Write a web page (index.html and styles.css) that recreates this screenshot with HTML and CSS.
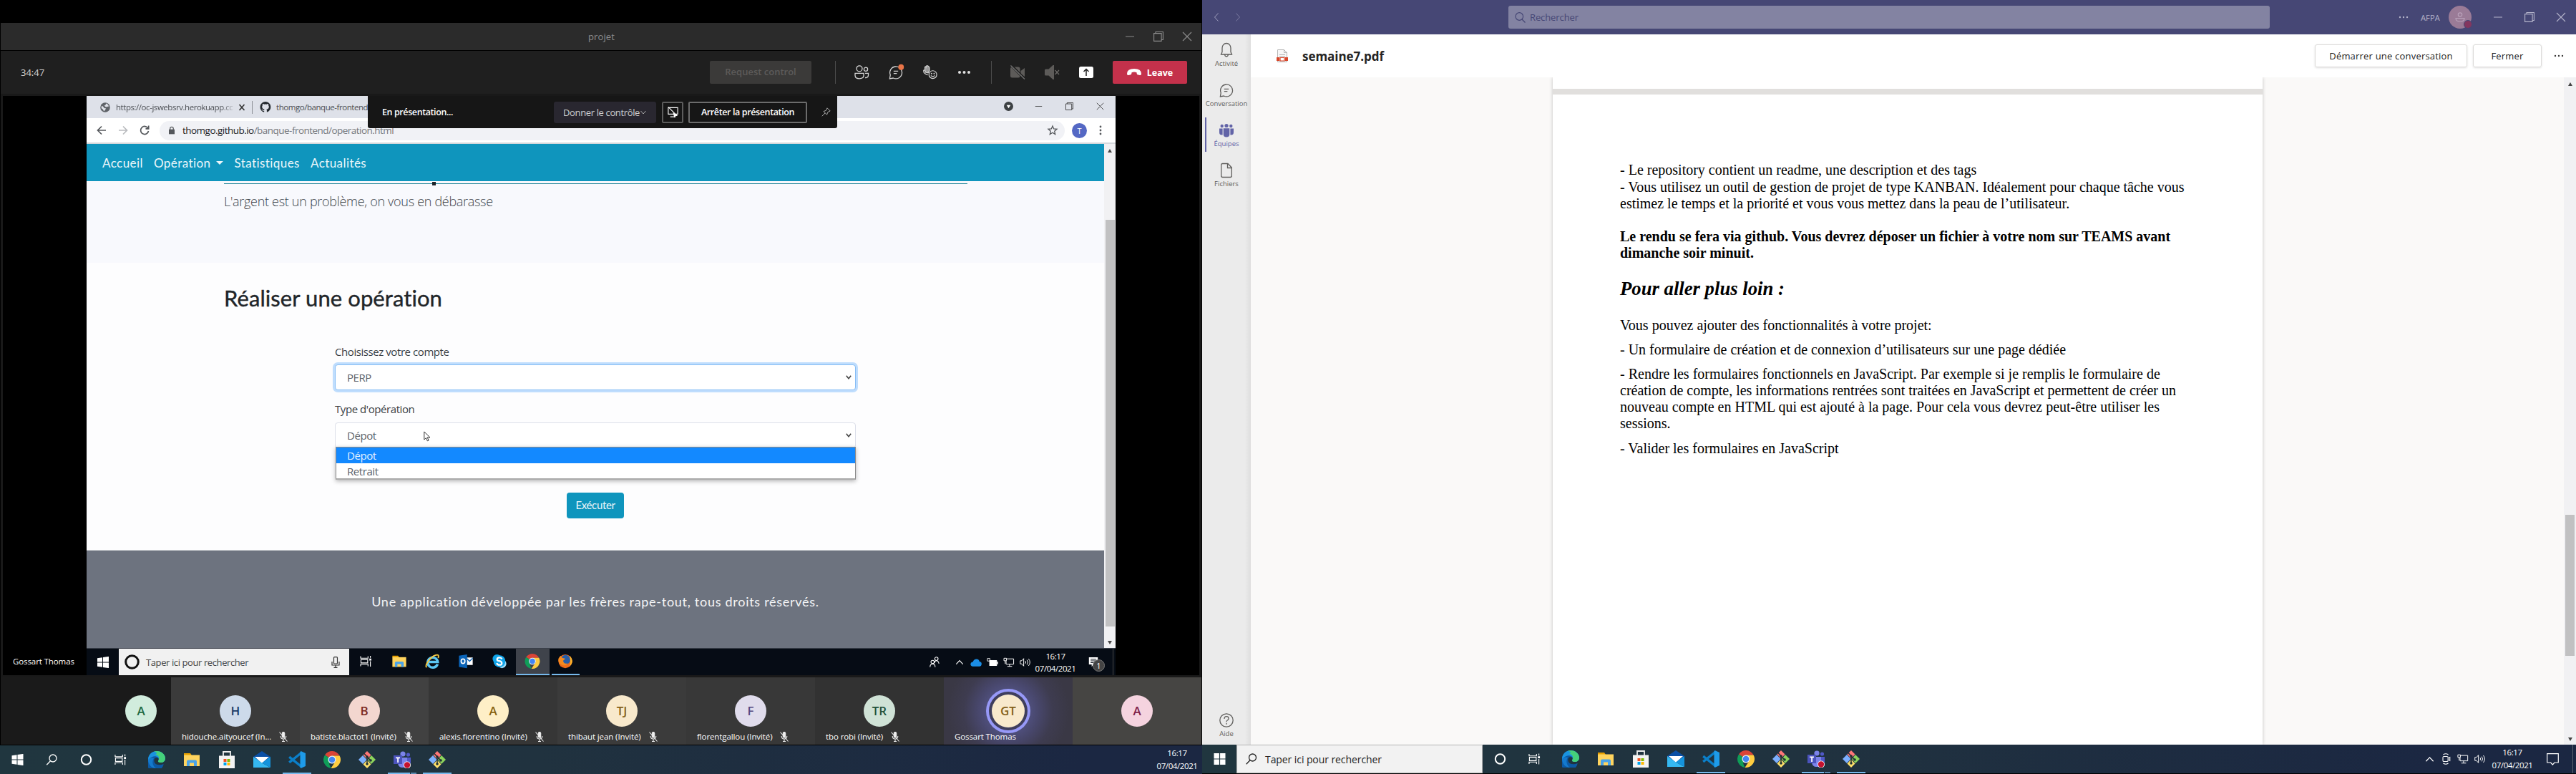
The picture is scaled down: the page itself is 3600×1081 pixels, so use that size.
FILE: index.html
```html
<!DOCTYPE html>
<html lang="fr">
<head>
<meta charset="utf-8">
<title>Bureau étendu</title>
<link rel="stylesheet" href="styles.css">
</head>
<body>
<svg class="defs" aria-hidden="true">
  <symbol id="win" viewBox="0 0 16 16"><path fill="#fff" d="M0 2.2 7 1.2v6.3H0zM8 1l8-1.1v7.6H8zM0 8.5h7v6.3l-7-1zM8 8.5h8v7.6L8 15z"/></symbol>
  <symbol id="win8" viewBox="0 0 16 16"><path fill="#fff" d="M0 0h7.4v7.4H0zM8.6 0H16v7.4H8.6zM0 8.6h7.4V16H0zM8.6 8.6H16V16H8.6z"/></symbol>
  <symbol id="search" viewBox="0 0 16 16"><g fill="none" stroke="currentColor" stroke-width="1.3"><circle cx="9.5" cy="6" r="5"/><path d="M6 9.8.7 15.3"/></g></symbol>
  <symbol id="ring" viewBox="0 0 16 16"><circle cx="8" cy="8" r="6.7" fill="none" stroke="currentColor" stroke-width="2"/></symbol>
  <symbol id="taskview" viewBox="0 0 18 16"><g fill="none" stroke="#fff" stroke-width="1.2"><path d="M1 .5v3h11v-3M1 15.500v-3h11v3M1.500 5.500h10v5h-10zM15.500 0v3M15.500 8v8"/></g><path fill="#fff" d="M14 4h3v3h-3z"/></symbol>
  <symbol id="edge" viewBox="0 0 24 24"><path fill="#0c59a4" d="M21.700 17.900A12 12 0 1 1 1 8c3-5 12-4 13 2-4-2-7 1-5 6 2 4 8 4 12.700 1.900z"/><path fill="#1a93e0" d="M0 12C0 5 5 0 12 0s12 5 12 10c0 4-3 6-6 6-3 0-5-1-3.500-3 1.500-4-3-6.500-7-5.500C3 8.500 0 12 0 16z"/><path fill="#45d17a" d="M8 .7C16-2 24 4 24 10c0 4-3 6-6 6-3 0-5-1-3.500-3 2-5-1-8-5-8C12 4 14 2 8 .7z"/><path fill="#1479cc" d="M0 12c0 7 5 12 11 12-5-3-6-10-3-14C4 9 1 10 0 12z"/></symbol>
  <symbol id="folder" viewBox="0 0 24 24"><path fill="#e8a100" d="M1 3h9l2 3h-11z"/><path fill="#ffd45e" d="M1 5.500h22V21H1z"/><path fill="#4aa3e8" d="M5 21v-6.500q0-2 2-2h10q2 0 2 2V21h-4v-4.500H9V21z"/></symbol>
  <symbol id="store" viewBox="0 0 24 24"><path fill="none" stroke="#eee" stroke-width="1.800" d="M7 7V1h10v6"/><path fill="#f3f3f3" d="M1 6.500h22V24H1z"/><path fill="#f25022" d="M7.500 11h4v4h-4z"/><path fill="#7fba00" d="M12.500 11h4v4h-4z"/><path fill="#00a4ef" d="M7.500 16h4v4h-4z"/><path fill="#ffb900" d="M12.500 16h4v4h-4z"/></symbol>
  <symbol id="mail" viewBox="0 0 24 24"><path fill="#0a4fa5" d="M0 8 12 0l12 8v8H0z"/><path fill="#fff" d="M2 8h20l-10 9z"/><path fill="#35b8f1" d="M0 8v15h24L12 16.500z"/><path fill="#1593dc" d="M24 8v15L12 16.500z"/></symbol>
  <symbol id="vscode" viewBox="0 0 24 24"><path fill="none" stroke="#0b7fc9" stroke-width="3.400" d="M1.200 15.800 18 2.500M1.200 8.200 18 21.500"/><path fill="#1e9be9" d="M17.500 0 24 3v18l-6.500 3-1-1.500v-21z"/></symbol>
  <symbol id="chrome" viewBox="0 0 24 24"><path fill="#db4437" d="M12 12 2 5.400A12 12 0 0 1 22.600 6.500H12z"/><path fill="#0f9d58" d="M12 12 8 18l2.500 5.900A12 12 0 0 1 2 5.400z"/><path fill="#ffcd40" d="M12 6.500h10.600A12 12 0 0 1 10.500 23.900L17 14z"/><circle cx="12" cy="12" r="5.500" fill="#f1f1f1"/><circle cx="12" cy="12" r="4.300" fill="#4285f4"/></symbol>
  <symbol id="git" viewBox="0 0 24 24"><path fill="#f77" d="m12 0 5.500 5.500-5.500 6-5.500-6z"/><path fill="#8cd35c" d="m18 6 6 6-6 6-5-6z"/><path fill="#ffe06b" d="m12 12.500 5.500 6L12 24l-5.500-5.500z"/><path fill="#7db0ff" d="m6 6 5.500 6L6 18l-6-6z"/><g stroke="#1f3036" stroke-width="1.500" fill="none"><path d="M8 3.500 12 8v10M12 8l5 5"/></g><g fill="#1f3036"><circle cx="12" cy="8" r="1.800"/><circle cx="12" cy="18" r="1.800"/><circle cx="17" cy="13" r="1.800"/></g></symbol>
  <symbol id="teams" viewBox="0 0 24 24"><circle cx="13" cy="4" r="3.600" fill="#7b83eb"/><circle cx="20.500" cy="5" r="2.600" fill="#5059c9"/><path fill="#5059c9" d="M16 9h8v7q-1 4-6 4z"/><path fill="#7b83eb" d="M6 9h13v8q-1 6-6.500 6T6 17z"/><path fill="#4b53bc" d="M0 6h12v12H0z"/><path fill="#fff" d="M3 8.500h6v1.700H7V16H5.200v-5.800H3z"/><circle cx="19" cy="19.500" r="5" fill="#fff"/><circle cx="19" cy="19.500" r="4.200" fill="#c4122f"/></symbol>
  <symbol id="min" viewBox="0 0 14 14"><path stroke="currentColor" d="M1 7h12"/></symbol>
  <symbol id="restore" viewBox="0 0 14 14"><path fill="none" stroke="currentColor" stroke-width="1.100" d="M.6 2.600h10.500v10.800H.6zM3 2.500V.5h10.400v11H11.500"/></symbol>
  <symbol id="close" viewBox="0 0 14 14"><path stroke="currentColor" stroke-width="1.100" d="m1 1 12 12M13 1 1 13"/></symbol>
  <symbol id="mute" viewBox="0 0 12 14"><g fill="none" stroke="#eee" stroke-width="1.100"><path fill="#eee" d="M4.300 2q0-1.500 1.700-1.500T7.700 2v4.500Q7.700 8 6 8T4.300 6.500z"/><path d="M2.200 6q0 4 3.800 4t3.800-4M6 10v3.500M4 13.500h4M.5.500l11 13"/></g></symbol>
  <symbol id="caret" viewBox="0 0 14 14"><path fill="none" stroke="#fff" stroke-width="1.300" d="M1.500 10 7 4.200 12.500 10"/></symbol>
  <symbol id="net" viewBox="0 0 18 16"><g fill="none" stroke="#fff" stroke-width="1.100"><path d="M5 2.500h11.500v8.500H4.500V6M10 11v3.500M6.500 14.500h7.500M1 1.500h4v4H1zM3 5.500v5"/></g></symbol>
  <symbol id="vol" viewBox="0 0 18 16"><g fill="none" stroke="#fff" stroke-width="1.100"><path d="M.8 5.500h2.500l3-3.500v12l-3-3.500H.8zM9 6q1.500 2 0 4M11.500 4.200q3 3.800 0 7.600M14 2.400q4.500 5.600 0 11.200"/></g></symbol>
  <symbol id="bubble" viewBox="0 0 22 22"><g fill="none" stroke="currentColor" stroke-width="1.400"><path d="M1.500 20.800 2.500 15A9.300 9.300 0 1 1 7 19.800z"/><path d="M7.500 9.300h7M7.500 12.800h5"/></g></symbol>
</svg>

<div class="desktop">
  <section class="screen-left">
    <header class="call-title">
      <span class="call-name">projet</span>
      <div class="winctl"><svg><use href="#min"/></svg><svg><use href="#restore"/></svg><svg><use href="#close"/></svg></div>
    </header>
    <div class="call-bar">
      <span class="timer">34:47</span>
      <span class="request">Request control</span>
      <i class="sep sep-a"></i>
      <div class="call-icons">
        <svg viewBox="0 0 20 20"><g fill="none" stroke="#d6d6d6" stroke-width="1.300"><circle cx="7" cy="4.800" r="4"/><circle cx="16" cy="5.800" r="2.600"/><path d="M1 11.300h12v3q0 4.500-6 4.500t-6-4.500zM15 11.300h4.500v2.500q0 4-4.500 3.700"/></g></svg>
        <svg viewBox="0 0 22 22" class="chat"><use href="#bubble"/><circle cx="19" cy="3" r="4.300" fill="#e97548"/></svg>
        <svg viewBox="0 0 22 22"><g fill="none" stroke="#d6d6d6" stroke-width="1.300"><path fill="#9a9a9a" d="M2.800 8V3Q3.800 1.800 4.500 3q0-2.500 1.700-2Q7.800.300 8.200 2.500q1.600-.5 1.600 2V8l-2 4-4-1z"/><path d="M2.800 7.500.8 8q-.5 5 6.500 7"/><circle cx="15" cy="14.500" r="6" fill="#1f1f1f"/><path d="M12 15.800q3 3.400 6 0"/></g><circle cx="13" cy="12.800" r="1.100" fill="#d6d6d6"/><circle cx="17" cy="12.800" r="1.100" fill="#d6d6d6"/></svg>
        <svg viewBox="0 0 20 20"><g fill="#e0e0e0"><circle cx="3" cy="10" r="2"/><circle cx="9.500" cy="10" r="2"/><circle cx="16" cy="10" r="2"/></g></svg>
      </div>
      <i class="sep sep-b"></i>
      <div class="call-icons">
        <svg viewBox="0 0 20 20"><g fill="#5d5b59"><rect x="0" y="2.500" width="13.500" height="15" rx="2.500"/><path d="m14.500 8 5.500-4v12l-5.500-4z"/></g><path stroke="#1f1f1f" stroke-width="3.500" d="m1 0 18.500 19"/><path stroke="#777" stroke-width="1.200" d="M.5.500 20 19.500"/></svg>
        <svg viewBox="0 0 20 20"><path fill="#5d5b59" d="M0 7q0-1.500 1.500-1.500h4L11.500 0H13v20h-1.500l-6-5.500h-4Q0 14.500 0 13z"/><path stroke="#6d6b69" stroke-width="1.200" d="m14.500 7 5.500 6m0-6-5.500 6"/></svg>
        <svg viewBox="0 0 20 20"><rect y="2" width="20" height="16" rx="2.500" fill="#fff"/><path fill="none" stroke="#222" stroke-width="1.500" d="M10 15V6M6.500 9 10 5.500 13.500 9"/></svg>
      </div>
      <span class="leave"><svg viewBox="0 0 20 10"><path fill="#fff" d="M0 7Q0 0 10 0t10 7q0 2.500-2 2l-3.500-.8q-1-.3-1-3Q10 4 6.500 5.200q0 2.700-1 3L2 9Q0 9.500 0 7z"/></svg>Leave</span>
    </div>

    <div class="share">
      <div class="share-side"><span>Gossart Thomas</span></div>
      <div class="shared">
        <div class="tabs">
          <svg class="globe" viewBox="0 0 14 14"><circle cx="7" cy="7" r="6.800" fill="#5f6368"/><path fill="#dfe1e8" d="M2 5q2 0 3 2t3 1q-1 4-3 4-1-3-3.500-4zM8 1.500q0 3-2.500 3L8 6.500l4-1Q11 2 8 1.500z"/></svg>
          <span class="tab-text first">https://oc-jswebsrv.herokuapp.cc</span>
          <svg class="tabx" viewBox="0 0 10 10"><path stroke="#333" stroke-width="1.600" d="m1.500 1 7 8m0-8-7 8"/></svg>
          <i class="tabsep"></i>
          <svg class="gh" viewBox="0 0 16 16"><path fill="#24292e" d="M8 0a8 8 0 0 0-2.530 15.590c.4.070.55-.17.55-.380v-1.500c-2.230.49-2.700-1-2.700-1-.36-.93-.89-1.170-.89-1.170-.73-.5.050-.49.050-.49.800.060 1.230.83 1.230.83.720 1.220 1.880.87 2.330.66.070-.52.280-.87.510-1.070-1.780-.2-3.640-.89-3.640-3.950 0-.87.310-1.590.82-2.150-.08-.2-.36-1.020.08-2.120 0 0 .67-.21 2.200.82a7.600 7.600 0 0 1 4 0c1.530-1.040 2.200-.82 2.200-.82.440 1.100.160 1.920.080 2.120.510.560.820 1.270.820 2.150 0 3.070-1.870 3.750-3.650 3.950.290.250.540.730.540 1.480v2.200c0 .21.150.46.550.38A8 8 0 0 0 8 0z"/></svg>
          <span class="tab-text">thomgo/banque-frontend</span>
          <div class="chrome-ctl">
            <svg viewBox="0 0 14 14"><circle cx="7" cy="7" r="7" fill="#3c4043"/><path fill="#fff" d="M4 5h6L7 10z"/></svg>
            <svg class="thin" viewBox="0 0 14 14"><use href="#min"/></svg>
            <svg class="thin" viewBox="0 0 14 14"><use href="#restore"/></svg>
            <svg class="thin" viewBox="0 0 14 14"><use href="#close"/></svg>
          </div>
        </div>
        <div class="urlbar">
          <svg viewBox="0 0 14 14"><path fill="none" stroke="#55585c" stroke-width="1.700" d="M13 7H1.500M7 1.500 1.500 7 7 12.500"/></svg>
          <svg viewBox="0 0 14 14"><path fill="none" stroke="#b9bbbe" stroke-width="1.700" d="M1 7h11.500M7 1.500 12.500 7 7 12.500"/></svg>
          <svg viewBox="0 0 14 14"><path fill="none" stroke="#55585c" stroke-width="1.700" d="M12 4.500A5.500 5.500 0 1 0 12.500 8M12.700.5v4.300H8.500"/></svg>
          <div class="url"><svg class="lock" viewBox="0 0 9 12"><path fill="#55585c" d="M0 4.500h9V12H0z"/><path fill="none" stroke="#55585c" stroke-width="1.400" d="M2 5V3q0-2.200 2.500-2.200T7 3v2"/></svg><span><b>thomgo.github.io</b>/banque-frontend/operation.html</span>
            <svg class="star" viewBox="0 0 14 14"><path fill="none" stroke="#55585c" stroke-width="1.300" d="m7 1 1.700 4 4.300.3L9.700 8.200l1 4.300L7 10.200l-3.700 2.300 1-4.300L1 5.300 5.300 5z"/></svg></div>
          <span class="me">T</span>
          <svg class="dots" viewBox="0 0 4 14"><g fill="#55585c"><circle cx="2" cy="2" r="1.400"/><circle cx="2" cy="7" r="1.400"/><circle cx="2" cy="12" r="1.400"/></g></svg>
        </div>
        <div class="viewport">
          <div class="site">
            <nav class="sitenav"><a>Accueil</a><a>Opération <i></i></a><a>Statistiques</a><a>Actualités</a></nav>
            <div class="hero"><div class="rule"><i></i></div><p>L'argent est un problème, on vous en débarasse</p></div>
            <main>
              <h1>Réaliser une opération</h1>
              <form>
                <label>Choisissez votre compte</label>
                <div class="select focus">PERP<svg viewBox="0 0 8 6"><path d="m.8.8 3.200 4 3.200-4"/></svg></div>
                <label class="second">Type d'opération</label>
                <div class="select">Dépot<svg viewBox="0 0 8 6"><path d="m.8.8 3.200 4 3.200-4"/></svg>
                  <div class="options"><div class="on">Dépot</div><div>Retrait</div></div>
                  <svg class="pointer" viewBox="0 0 10 15"><path fill="#fff" stroke="#333" d="M.8 1v11l2.700-2.500 1.800 4.300 1.800-.8-1.800-4h3.700z"/></svg>
                </div>
                <div class="btnrow"><span class="exec">Exécuter</span></div>
              </form>
            </main>
            <footer>Une application développée par les frères rape-tout, tous droits réservés.</footer>
          </div>
          <div class="scroll"><i class="up"></i><i class="thumb"></i><i class="down"></i></div>
        </div>
        <div class="sbar">
          <div class="sstart"><svg><use href="#win"/></svg></div>
          <div class="ssearch"><svg class="sring" viewBox="0 0 21 21"><circle cx="10.500" cy="10.500" r="8.800" fill="none" stroke="#111" stroke-width="3"/></svg><span>Taper ici pour rechercher</span>
            <svg class="mic" viewBox="0 0 12 16"><g fill="none" stroke="#333" stroke-width="1.200"><rect x="3.500" y=".7" width="5" height="9.300" rx="1"/><path d="M1 7v5h10V7M6 12v3M3.500 15.300h5"/></g></svg></div>
          <div class="sapp"><svg class="tv"><use href="#taskview"/></svg></div>
          <div class="sapp"><svg><use href="#folder"/></svg></div>
          <div class="sapp"><svg viewBox="0 0 24 24"><path fill="none" stroke="#5cc8f5" stroke-width="4" d="M20.500 16.500A8 8 0 1 1 20.800 13H7"/><path fill="none" stroke="#f7c940" stroke-width="2" d="M3 22C-1 18 12 1 21 2q2 1 .5 5"/></svg></div>
          <div class="sapp"><svg viewBox="0 0 24 24"><path fill="#0a64b8" d="M1 3 14 1v22L1 21z"/><path fill="#fff" d="M14 6h9v12h-9z"/><path fill="none" stroke="#0a64b8" stroke-width="1.500" d="m14 8 4 4 5-5"/><ellipse cx="7.500" cy="12" rx="3" ry="3.700" fill="none" stroke="#fff" stroke-width="2"/></svg></div>
          <div class="sapp"><svg viewBox="0 0 24 24"><circle cx="8" cy="8" r="7" fill="#0da4e8"/><circle cx="16" cy="16" r="7" fill="#9bdcf8"/><circle cx="12" cy="12" r="9.500" fill="#12a5ea"/><path fill="none" stroke="#fff" stroke-width="2.600" d="M16 8.500Q14.500 6 11.500 6.200T8.200 9q0 2 3.600 2.700t4 3.300q0 2.800-3.600 2.900T7.700 15"/></svg></div>
          <div class="sapp active run"><svg><use href="#chrome"/></svg></div>
          <div class="sapp run"><svg viewBox="0 0 24 24"><circle cx="12" cy="12" r="11" fill="#ef6c1a"/><circle cx="12.500" cy="9.500" r="7.500" fill="#285ea8"/><path fill="#ffb52b" d="M19 3q5 5 4 11-1 4-4 6 2-5 1-9z"/><path fill="#f58a1f" d="M1 8q2-4 4-5 0 3 4 4 4 0 2 2-3 1-2 4 2 4 7 2-3 5-9 3-7-3-6-10z"/></svg></div>
          <div class="stray">
            <div class="ppl"><svg viewBox="0 0 16 18"><g fill="none" stroke="#fff" stroke-width="1.200"><circle cx="11" cy="3.500" r="2.600"/><path d="M8 10q0-3.500 3-3.500T15 11"/><circle cx="5" cy="8.500" r="2.600"/><path d="M1 16.500q0-5 4-5t4 5"/></g></svg></div>
            <div><svg class="s13"><use href="#caret"/></svg></div>
            <div><svg viewBox="0 0 18 13"><path fill="#1b8ee6" d="M3.500 13Q0 12 .5 9 1 6 4 6q2-5.500 7-4.500 3 1 3.500 4 3.500.500 3.300 4-.3 3-3 3.500z"/></svg></div>
            <div><svg viewBox="0 0 18 15"><path fill="#fff" d="M4 4h12v9H4zM16.500 6.500H18v4h-1.500z"/><path fill="none" stroke="#fff" d="M1 1.500h4v4H1z"/></svg></div>
            <div><svg><use href="#net"/></svg></div>
            <div><svg><use href="#vol"/></svg></div>
            <div class="sclock"><span>16:17</span><span>07/04/2021</span></div>
            <div class="snotif"><svg viewBox="0 0 16 18"><path fill="#fff" d="M0 0h16v13H8l-3 4v-4H0z"/><path stroke="#0a1018" stroke-width="1.300" d="M3 3.500h10M3 6.500h10M3 9.500h10"/></svg><b>1</b></div>
            <i></i>
          </div>
        </div>
        <div class="presenting">
          <span class="ptext">En présentation...</span>
          <span class="give">Donner le contrôle<svg viewBox="0 0 8 6"><path d="m.5 1 3.500 4L7.500 1"/></svg></span>
          <span class="noshow"><svg viewBox="0 0 18 16"><g fill="none" stroke="#fff" stroke-width="1.200"><path d="M2 1h14v9.500H2zM5 14.500h8M2 0l13 13"/></g><path fill="#fff" d="M9 8l7 5-3.500.5L11 16z"/></svg></span>
          <span class="stop">Arrêter la présentation</span>
          <svg class="pin" viewBox="0 0 13 13"><path fill="none" stroke="#aaa" d="m8 .8 4.200 4.200-3.200 1.500-1.500 3.700L3 5.600l3.700-1.500zM5.200 7.800.7 12.300"/></svg>
        </div>
      </div>
    </div>

    <div class="people">
      <div class="p first"><b class="green">A</b></div>
      <div class="p t1"><b class="blue">H</b><span>hidouche.aityoucef (In...<svg><use href="#mute"/></svg></span></div>
      <div class="p t2"><b class="rose">B</b><span>batiste.blactot1 (Invité)<svg><use href="#mute"/></svg></span></div>
      <div class="p t3"><b class="gold">A</b><span>alexis.fiorentino (Invité)<svg><use href="#mute"/></svg></span></div>
      <div class="p t4"><b class="sand">TJ</b><span>thibaut jean (Invité)<svg><use href="#mute"/></svg></span></div>
      <div class="p t5"><b class="lilac">F</b><span>florentgallou (Invité)<svg><use href="#mute"/></svg></span></div>
      <div class="p t6"><b class="mint">TR</b><span>tbo robi (Invité)<svg><use href="#mute"/></svg></span></div>
      <div class="p talking"><b class="sand">GT</b><span>Gossart Thomas</span></div>
      <div class="p t8"><b class="pink">A</b></div>
    </div>

    <div class="taskbar tb-left">
      <div class="sys"><svg><use href="#win"/></svg></div>
      <div class="sys"><svg><use href="#search"/></svg></div>
      <div class="sys"><svg><use href="#ring"/></svg></div>
      <div class="sys"><svg><use href="#taskview"/></svg></div>
      <div class="apps">
        <div><svg><use href="#edge"/></svg></div><div><svg><use href="#folder"/></svg></div><div><svg><use href="#store"/></svg></div><div><svg><use href="#mail"/></svg></div><div class="run"><svg><use href="#vscode"/></svg></div><div><svg><use href="#chrome"/></svg></div><div><svg><use href="#git"/></svg></div><div class="run multi"><svg><use href="#teams"/></svg></div><div class="run"><svg><use href="#git"/></svg></div>
      </div>
      <div class="clock"><span>16:17</span><span>07/04/2021</span></div>
    </div>
  </section>

  <section class="screen-right">
    <header class="topbar">
      <svg class="chev" viewBox="0 0 8 12"><path d="M6.500.5 1.500 6l5 5.500"/></svg>
      <svg class="chev dim" viewBox="0 0 8 12"><path d="m1.500.5 5 5.500-5 5.500"/></svg>
      <div class="find"><svg viewBox="0 0 15 15"><g fill="none" stroke="#464775" stroke-width="1.200"><circle cx="6.300" cy="6" r="5.300"/><path d="m10 10 4.500 4.500"/></g></svg>Rechercher</div>
      <svg class="more" viewBox="0 0 14 4"><g fill="#b4b4ca"><circle cx="2" cy="2" r="1.200"/><circle cx="7" cy="2" r="1.200"/><circle cx="12" cy="2" r="1.200"/></g></svg>
      <span class="org">AFPA</span>
      <span class="avatar"><svg viewBox="0 0 14 14"><g fill="none" stroke="#b9a2ba" stroke-width="1.200"><circle cx="7" cy="3.500" r="2.700"/><path d="M1 8.500h12q0 4.500-6 4.500T1 8.500z"/></g></svg><i></i></span>
      <div class="winctl"><svg><use href="#min"/></svg><svg><use href="#restore"/></svg><svg><use href="#close"/></svg></div>
    </header>
    <div class="teams">
      <aside>
        <div class="rail"><svg viewBox="0 0 20 20"><g fill="none" stroke="#5f5e5c" stroke-width="1.300"><path d="M2.500 16h15L16 12.500V7A6 6.500 0 0 0 4 7v5.500zM7.500 16q.5 3 2.500 3t2.500-3"/></g></svg>Activité</div>
        <div class="rail"><svg><use href="#bubble"/></svg>Conversation</div>
        <div class="rail sel"><svg viewBox="0 0 20 20"><g fill="#6264a7"><circle cx="10" cy="3.500" r="2.600"/><circle cx="3.700" cy="4" r="2.200"/><circle cx="16.300" cy="4" r="2.200"/><path d="M5.700 7.200h8.600v8.300q0 4-4.300 4t-4.300-4zM0 7.500h4.600v9Q0 17 0 13zM15.400 7.500H20V13q0 4-4.600 3.500z"/></g></svg>Équipes</div>
        <div class="rail"><svg viewBox="0 0 20 20"><g fill="none" stroke="#5f5e5c" stroke-width="1.300"><path d="M2.700 2.500q0-2 2-2H12L17.300 6v11.500q0 2-2 2H4.700q-2 0-2-2zM11.500.8V6.500h5.500"/></g></svg>Fichiers</div>
        <div class="rail help"><svg viewBox="0 0 20 20"><g fill="none" stroke="#5f5e5c" stroke-width="1.300"><circle cx="10" cy="10" r="9.200"/><path d="M7 8q0-3.300 3-3.300T13 7.500q0 1.500-1.700 2.500T10 12.500M10 14v1.700"/></g></svg>Aide</div>
      </aside>
      <div class="pane">
        <div class="filebar">
          <svg class="pdf" viewBox="0 0 16 18"><path fill="#f7f7f7" stroke="#b5b5b5" d="M1.500.5h9l4 4v13h-13z"/><path fill="none" stroke="#b5b5b5" d="M10.500.5v4h4M4 7.500h8M4 9.500h8"/><path fill="#d8472b" d="M0 11h4v5H0zM12 11h4v5h-4z"/><path fill="#fff" stroke="#d8472b" stroke-width="1.200" d="M5 11.500h6v4.500H5z"/></svg>
          <h2>semaine7.pdf</h2>
          <span class="btn talk">Démarrer une conversation</span><span class="btn shut">Fermer</span>
          <svg class="more2" viewBox="0 0 14 4"><g fill="#3b3a39"><circle cx="2" cy="2" r="1.200"/><circle cx="7" cy="2" r="1.200"/><circle cx="12" cy="2" r="1.200"/></g></svg>
        </div>
        <div class="viewer">
          <div class="pages">
            <div class="prev"></div>
            <article>
              <p>- Le repository contient un readme, une description et des tags</p>
              <p class="l2">- Vous utilisez un outil de gestion de projet de type KANBAN. Idéalement pour chaque tâche vous<br>estimez le temps et la priorité et vous vous mettez dans la peau de l’utilisateur.</p>
              <p class="strong">Le rendu se fera via github. Vous devrez déposer un fichier à votre nom sur TEAMS avant<br>dimanche soir minuit.</p>
              <h3>Pour aller plus loin :</h3>
              <p>Vous pouvez ajouter des fonctionnalités à votre projet:</p>
              <p class="item">- Un formulaire de création et de connexion d’utilisateurs sur une page dédiée</p>
              <p class="item">- Rendre les formulaires fonctionnels en JavaScript. Par exemple si je remplis le formulaire de<br>création de compte, les informations rentrées sont traitées en JavaScript et permettent de créer un<br>nouveau compte en HTML qui est ajouté à la page. Pour cela vous devrez peut-être utiliser les<br>sessions.</p>
              <p class="item last">- Valider les formulaires en JavaScript</p>
            </article>
          </div>
          <div class="scroll pdfscroll"><i class="up"></i><i class="thumb"></i><i class="down"></i></div>
        </div>
      </div>
    </div>
    <div class="taskbar tb-right">
      <div class="sys"><svg><use href="#win8"/></svg></div>
      <div class="type"><svg><use href="#search"/></svg>Taper ici pour rechercher</div>
      <div class="sys"><svg><use href="#ring"/></svg></div>
      <div class="sys"><svg><use href="#taskview"/></svg></div>
      <div class="apps">
        <div><svg><use href="#edge"/></svg></div><div><svg><use href="#folder"/></svg></div><div><svg><use href="#store"/></svg></div><div><svg><use href="#mail"/></svg></div><div class="run"><svg><use href="#vscode"/></svg></div><div><svg><use href="#chrome"/></svg></div><div><svg><use href="#git"/></svg></div><div class="run multi"><svg><use href="#teams"/></svg></div><div class="run"><svg><use href="#git"/></svg></div>
      </div>
      <div class="tray">
        <svg class="s13"><use href="#caret"/></svg>
        <svg viewBox="0 0 16 18"><g fill="none" stroke="#fff" stroke-width="1.200"><rect x="3.500" y="5" width="8" height="8" rx="1.500"/><path d="m12 8 2.500-1.500v5L12 10M4 2.200Q8-.5 12 2.200M4 15.800q4 2.700 8 0"/></g></svg>
        <svg><use href="#net"/></svg>
        <svg><use href="#vol"/></svg>
      </div>
      <div class="clock"><span>16:17</span><span>07/04/2021</span></div>
      <svg class="notif" viewBox="0 0 17 17"><path fill="none" stroke="#fff" stroke-width="1.200" d="M.7.700h15.600v12.300H11l-2.700 3-2.700-3H.7z"/></svg>
      <i class="peek"></i>
    </div>
  </section>
</div>
</body>
</html>
```
FILE: styles.css
```css
* { box-sizing: border-box; }
body { margin: 0; background: #000; font: 13px "Open Sans", "Noto Sans", sans-serif; color: #fff; white-space: nowrap; }
h1, h2, h3, p { margin: 0; }
svg { display: block; flex: none; overflow: visible; }
.defs { position: absolute; width: 0; height: 0; }
.desktop { display: flex; width: 3600px; height: 1081px; overflow: hidden; }

/* call window */
.screen-left { width: 1680px; flex: none; padding-top: 32px; display: flex; flex-direction: column; }
.call-title { height: 38px; margin: 0 1px; background: #2b2b2b; display: flex; align-items: center; color: #8d8d8d; }
.call-name { margin-left: 821px; letter-spacing: .1px; }
.winctl { display: flex; gap: 26px; color: inherit; }
.winctl svg { width: 14px; height: 14px; }
.call-title .winctl { margin-left: auto; margin-right: 13px; }
.call-bar { height: 60px; margin: 1px 1px 0; background: #1f1f1f; display: flex; align-items: center; }
.timer { width: 963px; padding-left: 28px; color: #d5d5d5; }
.request { width: 142px; height: 32px; margin-left: 28px; background: #3b3a39; color: #5d5b59; border-radius: 2px; font-weight: 600; line-height: 31px; text-align: center; flex: none; }
.sep { width: 1px; height: 32px; background: #4c4c4c; flex: none; }
.sep-a { margin: 0 26px 0 33px; }
.sep-b { margin: 0 26px 0 27px; }
.call-icons { display: flex; gap: 28px; color: #d6d6d6; }
.call-icons svg { width: 20px; height: 20px; }
.leave { width: 104px; height: 32px; margin-left: 27px; background: #c4314b; border-radius: 2px; display: flex; align-items: center; justify-content: center; gap: 8px; font-weight: 700; font-size: 12.500px; }
.leave svg { width: 20px; height: 10px; }
.share { height: 812px; border-top: 3px solid #191919; margin: 0 1px; border-left: 3px solid #191919; border-right: 3px solid #191919; display: flex; background: #000; }
.share-side { width: 117px; display: flex; align-items: flex-end; padding: 0 0 10px 14px; font-size: 11.500px; line-height: 18px; letter-spacing: -.1px; }
.shared { width: 1438px; position: relative; }

/* shared browser */
.tabs { height: 31px; background: #dee1e9; display: flex; align-items: center; color: #4c4f54; padding-left: 19px; }
.globe { width: 14px; height: 14px; margin-right: 8px; }
.tab-text { font-size: 11.500px; letter-spacing: -.45px; width: 130px; overflow: hidden; }
.tab-text.first { width: 164px; margin-right: 7px; -webkit-mask: linear-gradient(90deg, #000 90%, rgba(0,0,0,.2)); mask: linear-gradient(90deg, #000 90%, rgba(0,0,0,.2)); }
.tabx { width: 10px; height: 10px; margin-right: 9px; }
.tabsep { width: 1px; height: 18px; background: #8b8e94; margin-right: 10px; }
.gh { width: 16px; height: 15px; margin-right: 7px; }
.chrome-ctl { margin-left: auto; display: flex; align-items: center; color: #333; margin-right: 16px; gap: 30px; padding-bottom: 3px; }
.chrome-ctl svg { width: 13px; height: 13px; }
.chrome-ctl .thin { width: 11px; height: 11px; }
.chrome-ctl .thin:nth-child(3), .chrome-ctl .thin:nth-child(4) { margin-left: 2px; }
.urlbar { height: 36px; background: #fff; border-bottom: 2px solid #d5d8dc; display: flex; align-items: center; padding-left: 14px; }
.urlbar > svg { width: 14px; height: 14px; margin-right: 16px; }
.url { width: 1265px; height: 27px; margin-left: -2px; border-radius: 14px; background: #f1f2f6; display: flex; align-items: center; color: #75787d; font-size: 13.500px; letter-spacing: -.53px; padding: 0 10px 0 13px; margin-right: 10px; }
.url b { font-weight: 400; color: #202124; }
.lock { width: 8px; height: 12px; margin-right: 11px; }
.star { width: 14px; height: 14px; margin-left: auto; }
.me { width: 21px; height: 21px; border-radius: 50%; background: #5468c4; font-size: 11px; line-height: 21px; text-align: center; }
.urlbar .dots { width: 4px; height: 14px; margin: 0 0 0 17px; }
.viewport { height: 704px; display: flex; }
.site { width: 1422px; background: #fdfdfe; }
.sitenav { height: 52px; background: #0f95bd; display: flex; align-items: center; font: 17px Lato, sans-serif; letter-spacing: .43px; color: #eaf6fa; padding-left: 22px; gap: 15px; }
.sitenav a { display: flex; align-items: center; }
.sitenav i { border: 5px solid transparent; border-top: 5px solid #eaf6fa; border-bottom: 0; margin-left: 8px; }
.hero { height: 114px; background: #f8f9fd; padding: 3px 0 0 192px; }
.rule { width: 1039px; height: 1px; background: #2b8a9c; }
.rule i { display: block; width: 5px; height: 5px; background: #1d2329; position: relative; left: 291px; top: -2px; }
.hero p { margin-top: 11px; font-size: 18px; line-height: 26px; font-weight: 300; letter-spacing: -.3px; color: #3f454b; }
main { height: 401px; padding: 30px 0 0 192px; color: #3a3f45; }
h1 { font: 400 31px/38px Lato, sans-serif; letter-spacing: .08px; color: #212529; -webkit-text-stroke: .4px #212529; }
form { margin: 46px 0 0 155px; width: 728px; font-size: 15px; letter-spacing: -.43px; line-height: 20px; }
label { display: block; margin-bottom: 8px; }
label.second { margin: 16px 0 9px; }
.select { height: 36px; border: 1px solid #dcdfe9; border-radius: 4px; background: #fff; display: flex; align-items: center; padding: 0 5px 0 16px; color: #5b6168; position: relative; }
.select.focus { border-color: #86bdf5; box-shadow: 0 0 0 3px #bfddfd; }
.select > svg:not(.pointer) { width: 8px; height: 6px; margin-left: auto; fill: none; stroke: #444; stroke-width: 1.600; }
.options { position: absolute; left: 0; right: -1px; top: 33px; border: 1px solid #8a8a8a; border-bottom: 2px solid #aaa; background: #fff; box-shadow: 0 2px 6px rgba(0,0,0,.3); z-index: 1; }
.options div { height: 21.500px; line-height: 22px; padding-left: 15px; }
.options .on { background: #1389ff; color: #e6f3ff; }
.pointer { position: absolute; left: 123px; top: 11px; width: 10px; height: 15px; }
.btnrow { display: flex; justify-content: center; margin-top: 62px; }
.exec { width: 80px; height: 36px; border-radius: 4px; background: #0f95bd; color: #eaf6fa; font: 15px/35px Lato, sans-serif; text-align: center; letter-spacing: -.35px; }
footer { height: 137px; border-top: 1px solid #cfd2d6; background: #6d737f; font: 18px/143px Lato, sans-serif; letter-spacing: .72px; text-align: center; color: #f3f4f6; }
.scroll { width: 16px; background: #f1f1f3; display: flex; flex-direction: column; align-items: center; }
.scroll i { flex: none; }
.scroll .up { border: 3.500px solid transparent; border-top: 0; border-bottom: 5px solid #444; margin-top: 7px; }
.scroll .down { border: 3.500px solid transparent; border-bottom: 0; border-top: 5px solid #444; margin: auto 0 5px; }
.scroll .thumb { width: 13px; height: 568px; background: #c1c1c2; margin-top: 94px; }

/* shared task bar */
.sbar { height: 38px; background: #060c15; display: flex; border-top: 1px solid #3a3f4a; }
.sstart { width: 45px; display: flex; align-items: center; justify-content: center; }
.sstart svg { width: 16px; height: 16px; }
.ssearch { width: 322px; background: #f1f1f1; color: #444; display: flex; align-items: center; letter-spacing: -.4px; padding: 0 13px 0 8px; }
.sring { width: 21px; height: 21px; margin-right: 9px; }
.mic { width: 12px; height: 16px; margin-left: auto; }
.sapp { width: 46.600px; display: flex; align-items: center; justify-content: center; border-bottom: 2px solid transparent; }
.sapp svg { width: 22px; height: 21px; }
.sapp .tv { width: 17px; height: 15px; }
.sapp.active { background: #3f434b; }
.sapp.run { border-color: #76b9ed; }
.sapp.run:not(.active) { margin-left: 3px; width: 39px; }
.stray { margin-left: auto; display: flex; align-items: center; }
.stray div { width: 23px; display: flex; justify-content: center; align-items: center; }
.stray svg { width: 16px; height: 14px; }
.stray .s13 { width: 12px; height: 12px; }
.stray .ppl { width: 26px; margin-right: 10px; }
.stray .ppl svg { height: 16px; }
.stray .sclock { width: 62px; flex-direction: column; font-size: 11.500px; line-height: 17px; letter-spacing: -.42px; }
.stray .snotif { width: 49px; position: relative; justify-content: flex-start; padding-left: 14px; }
.snotif b { position: absolute; left: 21px; top: 3px; width: 17px; height: 17px; border-radius: 50%; background: #444; border: 1px solid #777; font: 11px/15px "Open Sans", sans-serif; text-align: center; }
.stray i { width: 1px; height: 37px; background: #444; margin-right: 3px; }

/* presenter toolbar floats over the shared browser */
.presenting { position: absolute; left: 393px; top: 0; width: 656px; height: 45px; background: #161616; border-radius: 0 0 3px 3px; display: flex; align-items: center; padding: 0 9px 0 20px; font-weight: 600; font-size: 12.500px; }
.ptext { width: 240px; letter-spacing: -.4px; }
.give { width: 143px; height: 30px; background: #292730; color: #cfcfcf; display: flex; align-items: center; padding-left: 13px; font-weight: 400; font-size: 13px; letter-spacing: -.36px; border-radius: 3px; }
.give svg { width: 8px; height: 6px; margin-left: 1px; fill: none; stroke: #aaa; }
.noshow { width: 30px; height: 30px; border: 2px solid #5c5c5c; margin: 0 7px 0 8px; display: flex; align-items: center; justify-content: center; border-radius: 2px; }
.noshow svg { width: 17px; height: 16px; }
.stop { width: 166px; height: 30px; border: 2px solid #6c6c6c; line-height: 25px; text-align: center; letter-spacing: -.38px; border-radius: 2px; }
.pin { width: 13px; height: 13px; margin-left: auto; }

/* participants */
.people { height: 98px; border-top: 3px solid #191919; border-bottom: 1px solid #000; margin: 0 1px; display: flex; }
.p { width: 180px; position: relative; display: flex; justify-content: center; padding-top: 25px; }
.p.first { width: 238px; background: #1a1a1a; padding-left: 154px; }
.t1 { background: #3b3b3b; } .t2 { background: #414141; } .t3 { background: #363636; } .t4 { background: #3b3b3b; }
.t5 { background: #383838; } .t6 { background: #323232; } .t8 { background: #464543; }
.talking { background: radial-gradient(circle at 50% 50%, #55568a 20px, #48476c 42px, #3e3c50 62px, #3a3845 85px); }
.p b { width: 44px; height: 44px; border-radius: 50%; font: 600 17px/44px "Open Sans", sans-serif; text-align: center; }
.p span { position: absolute; left: 15px; bottom: 3px; font-size: 11.500px; line-height: 16px; letter-spacing: -.1px; display: flex; align-items: center; gap: 11px; }
.p span svg { width: 12px; height: 14px; }
.green { background: #d1ecdd; color: #1f6a43; } .blue { background: #cddaea; color: #1b3b66; } .rose { background: #f3d6cf; color: #7c2a1e; }
.gold { background: #feefc7; color: #886310; } .sand { background: #f8e9cc; color: #85611a; } .lilac { background: #e0dcec; color: #54477d; }
.mint { background: #cfe2d6; color: #22523a; } .pink { background: #f5d3df; color: #80224a; }
.talking b { box-shadow: 0 0 0 4px #3f3e5c, 0 0 0 8px #9799f8; width: 46px; height: 46px; line-height: 46px; margin-top: -1px; }

/* task bars */
.taskbar { height: 40px; background: linear-gradient(90deg, #20363f, #20323f 45%, #1b2742 90%); display: flex; align-items: center; color: #fff; }
.sys { width: 48px; display: flex; justify-content: center; flex: none; }
.sys svg { width: 17px; height: 16px; }
.apps { display: flex; margin-left: 2.500px; height: 40px; }
.apps div { width: 49px; display: flex; align-items: center; justify-content: center; position: relative; }
.apps svg { width: 24px; height: 24px; }
.apps .run::after { content: ""; position: absolute; bottom: 0; left: 4.500px; width: 40px; height: 2px; background: #76b9ed; }
.apps .multi::after { background: linear-gradient(90deg, #76b9ed 31px, #20323f 31px 32px, #5a8ab0 32px); }
.clock { display: flex; flex-direction: column; align-items: center; font-size: 11.500px; line-height: 18px; letter-spacing: -.4px; width: 60px; }
.tb-left .clock { margin-left: auto; margin-right: 5px; }
.type { width: 344px; height: 40px; background: #f2f2f2; border: 1px solid #b5b5b5; color: #222; display: flex; align-items: center; font-size: 14px; letter-spacing: -.08px; padding-left: 12px; }
.type svg { width: 16px; height: 16px; margin-right: 11px; }
.tray { margin-left: auto; display: flex; align-items: center; gap: 8px; margin-right: 7px; }
.tray svg { width: 16px; height: 16px; }
.tray .s13 { width: 13px; height: 13px; }
.notif { width: 17px; height: 17px; margin-left: 18px; }
.peek { width: 1px; height: 40px; background: #59636f; margin: 0 4px 0 19px; }

/* document window */
.screen-right { width: 1920px; flex: none; display: flex; flex-direction: column; }
.topbar { height: 48px; background: #464775; display: flex; align-items: center; color: #b4b4ca; padding-left: 16px; }
.chev { width: 8px; height: 12px; fill: none; stroke: #a2a2c0; margin-right: 22px; }
.chev.dim { stroke: #7c7ca2; }
.find { width: 1064px; height: 32px; margin-left: 352px; border-radius: 3px; background: #8383a2; color: #464775; display: flex; align-items: center; letter-spacing: -.1px; padding-left: 9px; }
.find svg { width: 15px; height: 15px; margin-right: 6px; }
.more { width: 14px; height: 4px; margin-left: 180px; }
.org { font-size: 11px; letter-spacing: .15px; margin: 0 12px 0 17px; }
.avatar { width: 32px; height: 32px; border-radius: 50%; background: #9a7b97; position: relative; display: flex; align-items: center; justify-content: center; }
.avatar svg { width: 14px; height: 14px; }
.avatar i { position: absolute; right: -1px; bottom: 0; width: 12px; height: 12px; border-radius: 50%; background: #83365f; border: 1px solid #464775; }
.topbar .winctl { gap: 30px; margin-left: 30px; }
.teams { height: 992px; display: flex; color: #252423; }
aside { width: 68px; background: linear-gradient(90deg, #ebebeb 60px, #dedede); padding-top: 12px; display: flex; flex-direction: column; }
.rail { height: 56px; margin-left: 4px; padding-right: 4px; display: flex; flex-direction: column; align-items: center; font-size: 9.500px; line-height: 14px; color: #5f5e5c; gap: 2px; }
.rail svg { width: 20px; height: 20px; }
.rail.sel { color: #6264a7; position: relative; }
.rail.sel::before { content: ""; position: absolute; left: 0; top: -8px; width: 2px; height: 48px; background: #6264a7; }
.rail.help { margin-top: auto; height: 44px; }
.pane { width: 1852px; display: flex; flex-direction: column; }
.filebar { height: 60px; background: #fff; display: flex; align-items: center; padding-left: 36px; }
.pdf { width: 16px; height: 18px; margin-right: 20px; }
h2 { font-size: 17px; font-weight: 700; letter-spacing: -.04px; margin-right: auto; }
.btn { height: 32px; border: 1px solid #dcdbd9; border-radius: 3px; line-height: 30px; text-align: center; letter-spacing: .2px; box-shadow: 0 1px 3px rgba(0,0,0,.12); }
.talk { width: 213px; margin-right: 8px; }
.shut { width: 96px; }
.more2 { width: 14px; height: 4px; margin: 0 17px; }
.viewer { height: 932px; background: #faf9f8; display: flex; padding-left: 422px; overflow: hidden; }
.pages { width: 992px; background: #e1dfdd; box-shadow: 0 0 5px rgba(0,0,0,.22); }
.prev { height: 16px; background: #fff; margin-bottom: 8px; }
article { height: 908px; background: #fff; padding: 94px 0 0 94px; font: 20px/23px "Liberation Serif", "Times New Roman", serif; color: #000; }
article .l2 { margin-top: 1px; }
article .strong { margin-top: 23px; font-weight: 700; }
h3 { font: italic 700 26.700px/30px "Liberation Serif", "Times New Roman", serif; margin: 23px 0 25px; }
article .item { margin-top: 11px; }
article .last { margin-top: 12px; }
.pdfscroll { width: 17px; margin-left: auto; }
.pdfscroll .thumb { height: 197px; margin-top: 599px; }
```
